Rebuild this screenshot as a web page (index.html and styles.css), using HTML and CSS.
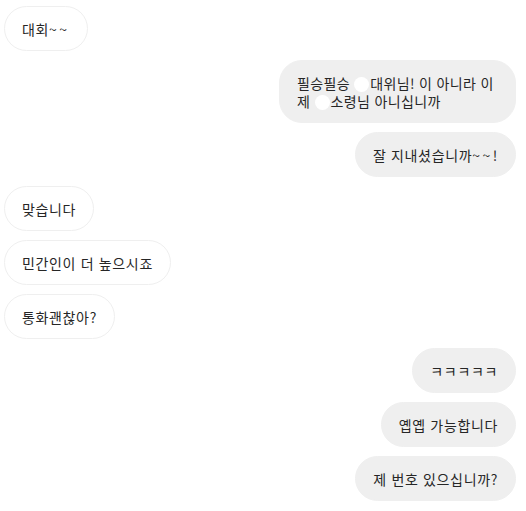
FILE: index.html
```html
<!DOCTYPE html>
<html lang="ko">
<head>
<meta charset="utf-8">
<link rel="stylesheet" href="styles.css">
</head>
<body>
<div class="chat">
  <div class="row in"><div class="bubble">대회<span class="tilde">~~</span></div></div>
  <div class="row out"><div class="bubble wide">필승필승 <span class="emo"></span>대위님! 이 아니라 이제 <span class="emo"></span>소령님 아니십니까</div></div>
  <div class="row out"><div class="bubble">잘 지내셨습니까<span class="tilde">~~</span>!</div></div>
  <div class="row in"><div class="bubble">맞습니다</div></div>
  <div class="row in"><div class="bubble">민간인이 더 높으시죠</div></div>
  <div class="row in"><div class="bubble">통화괜찮아?</div></div>
  <div class="row out"><div class="bubble">ㅋㅋㅋㅋㅋ</div></div>
  <div class="row out"><div class="bubble">옙옙 가능합니다</div></div>
  <div class="row out"><div class="bubble">제 번호 있으십니까?</div></div>
</div>
</body>
</html>
```
FILE: styles.css
```css
html, body {
  margin: 0;
  padding: 0;
  background: #ffffff;
}
.chat {
  display: flex;
  flex-direction: column;
  gap: 9px;
  padding: 6px 10px 0 4px;
  font-family: "Noto Sans CJK KR", "Noto Sans", sans-serif;
  font-size: 14px;
  color: #262626;
  letter-spacing: 0.65px;
}
.row {
  display: flex;
}
.row.in {
  justify-content: flex-start;
}
.row.out {
  justify-content: flex-end;
}
.bubble {
  box-sizing: border-box;
  border: 1px solid #efefef;
  border-radius: 23px;
  padding: 12.5px 17px;
  line-height: 18px;
  background: #ffffff;
}
.row.out .bubble {
  background: #efefef;
}
.bubble.wide {
  max-width: 237px;
  letter-spacing: 0.35px;
}
.tilde {
  letter-spacing: 2.5px;
}
.emo {
  display: inline-block;
  width: 15px;
  height: 15px;
  border-radius: 50%;
  background: #ffffff;
  vertical-align: -3px;
  margin-right: 1px;
}
```
